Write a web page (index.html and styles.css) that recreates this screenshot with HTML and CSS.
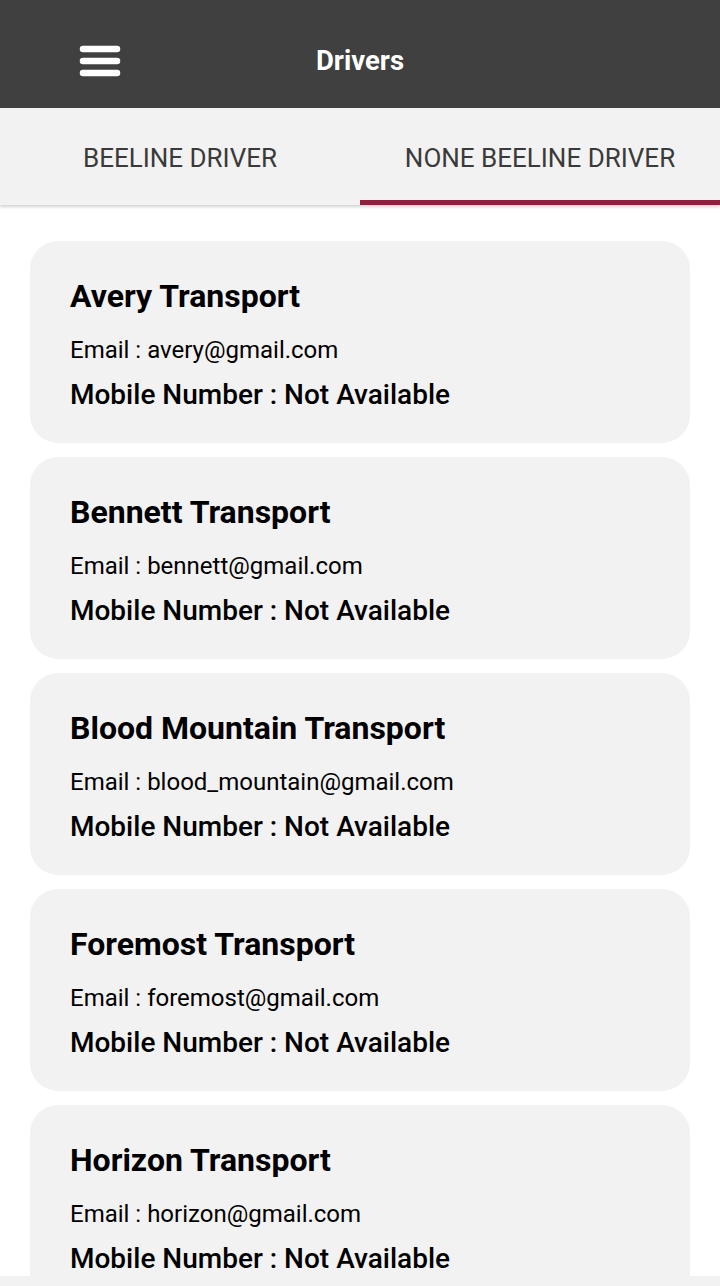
FILE: index.html
```html
<!DOCTYPE html>
<html>
<head>
<meta charset="utf-8">
<link rel="stylesheet" href="styles.css">
</head>
<body>
<header class="appbar">
  <div class="menu">
    <svg width="42" height="32" viewBox="0 0 42 32"><g stroke="#fff" stroke-width="6.5" stroke-linecap="round"><line x1="4" y1="4" x2="38" y2="4"/><line x1="4" y1="16" x2="38" y2="16"/><line x1="4" y1="28" x2="38" y2="28"/></g></svg>
  </div>
  <h1 class="title">Drivers</h1>
</header>
<nav class="tabs">
  <div class="tab">BEELINE DRIVER</div>
  <div class="tab active">NONE BEELINE DRIVER</div>
</nav>
<main class="list">
  <div class="card">
    <div class="name">Avery Transport</div>
    <div class="email">Email : avery@gmail.com</div>
    <div class="mobile">Mobile Number : Not Available</div>
  </div>
  <div class="card">
    <div class="name">Bennett Transport</div>
    <div class="email">Email : bennett@gmail.com</div>
    <div class="mobile">Mobile Number : Not Available</div>
  </div>
  <div class="card">
    <div class="name">Blood Mountain Transport</div>
    <div class="email">Email : blood_mountain@gmail.com</div>
    <div class="mobile">Mobile Number : Not Available</div>
  </div>
  <div class="card">
    <div class="name">Foremost Transport</div>
    <div class="email">Email : foremost@gmail.com</div>
    <div class="mobile">Mobile Number : Not Available</div>
  </div>
  <div class="card">
    <div class="name">Horizon Transport</div>
    <div class="email">Email : horizon@gmail.com</div>
    <div class="mobile">Mobile Number : Not Available</div>
  </div>
</main>
<div class="bottombar"></div>
</body>
</html>
```
FILE: styles.css
```css
* { box-sizing: border-box; }
html, body { margin: 0; padding: 0; }
body {
  width: 720px;
  height: 1286px;
  overflow: hidden;
  background: #ffffff;
  font-family: Roboto, "Liberation Sans", sans-serif;
  color: #000;
}
.appbar {
  height: 108px;
  background: #404040;
  display: flex;
  align-items: center;
  padding-top: 13px;
}
.menu {
  width: 200px;
  padding-left: 79px;
  display: flex;
  align-items: center;
}
.title {
  margin: 0 0 0 -200px;
  flex: 1;
  text-align: center;
  color: #fff;
  font-size: 27.5px;
  font-weight: 700;
}
.tabs {
  height: 97px;
  background: #f2f2f2;
  display: flex;
  box-shadow: 0 2px 3px rgba(0,0,0,0.18);
}
.tab {
  flex: 1;
  display: flex;
  align-items: center;
  justify-content: center;
  font-size: 26px;
  color: #3a3a3a;
  border-bottom: 5px solid transparent;
  padding-top: 8px;
}
.tab.active {
  border-bottom-color: #8e1f3d;
}
.list {
  padding: 36px 30px 0;
  display: flex;
  flex-direction: column;
  gap: 14px;
}
.card {
  background: #f2f2f2;
  border-radius: 28px;
  height: 202px;
  padding: 37px 40px 0;
  flex-shrink: 0;
}
.name {
  font-size: 32px;
  font-weight: 700;
  line-height: 36px;
}
.email {
  font-size: 24px;
  line-height: 28px;
  margin-top: 22px;
}
.mobile {
  font-size: 28px;
  font-weight: 500;
  line-height: 32px;
  margin-top: 15px;
}
.bottombar {
  position: fixed;
  left: 0;
  right: 0;
  bottom: 0;
  height: 10px;
  background: #f2f2f2;
}
```
